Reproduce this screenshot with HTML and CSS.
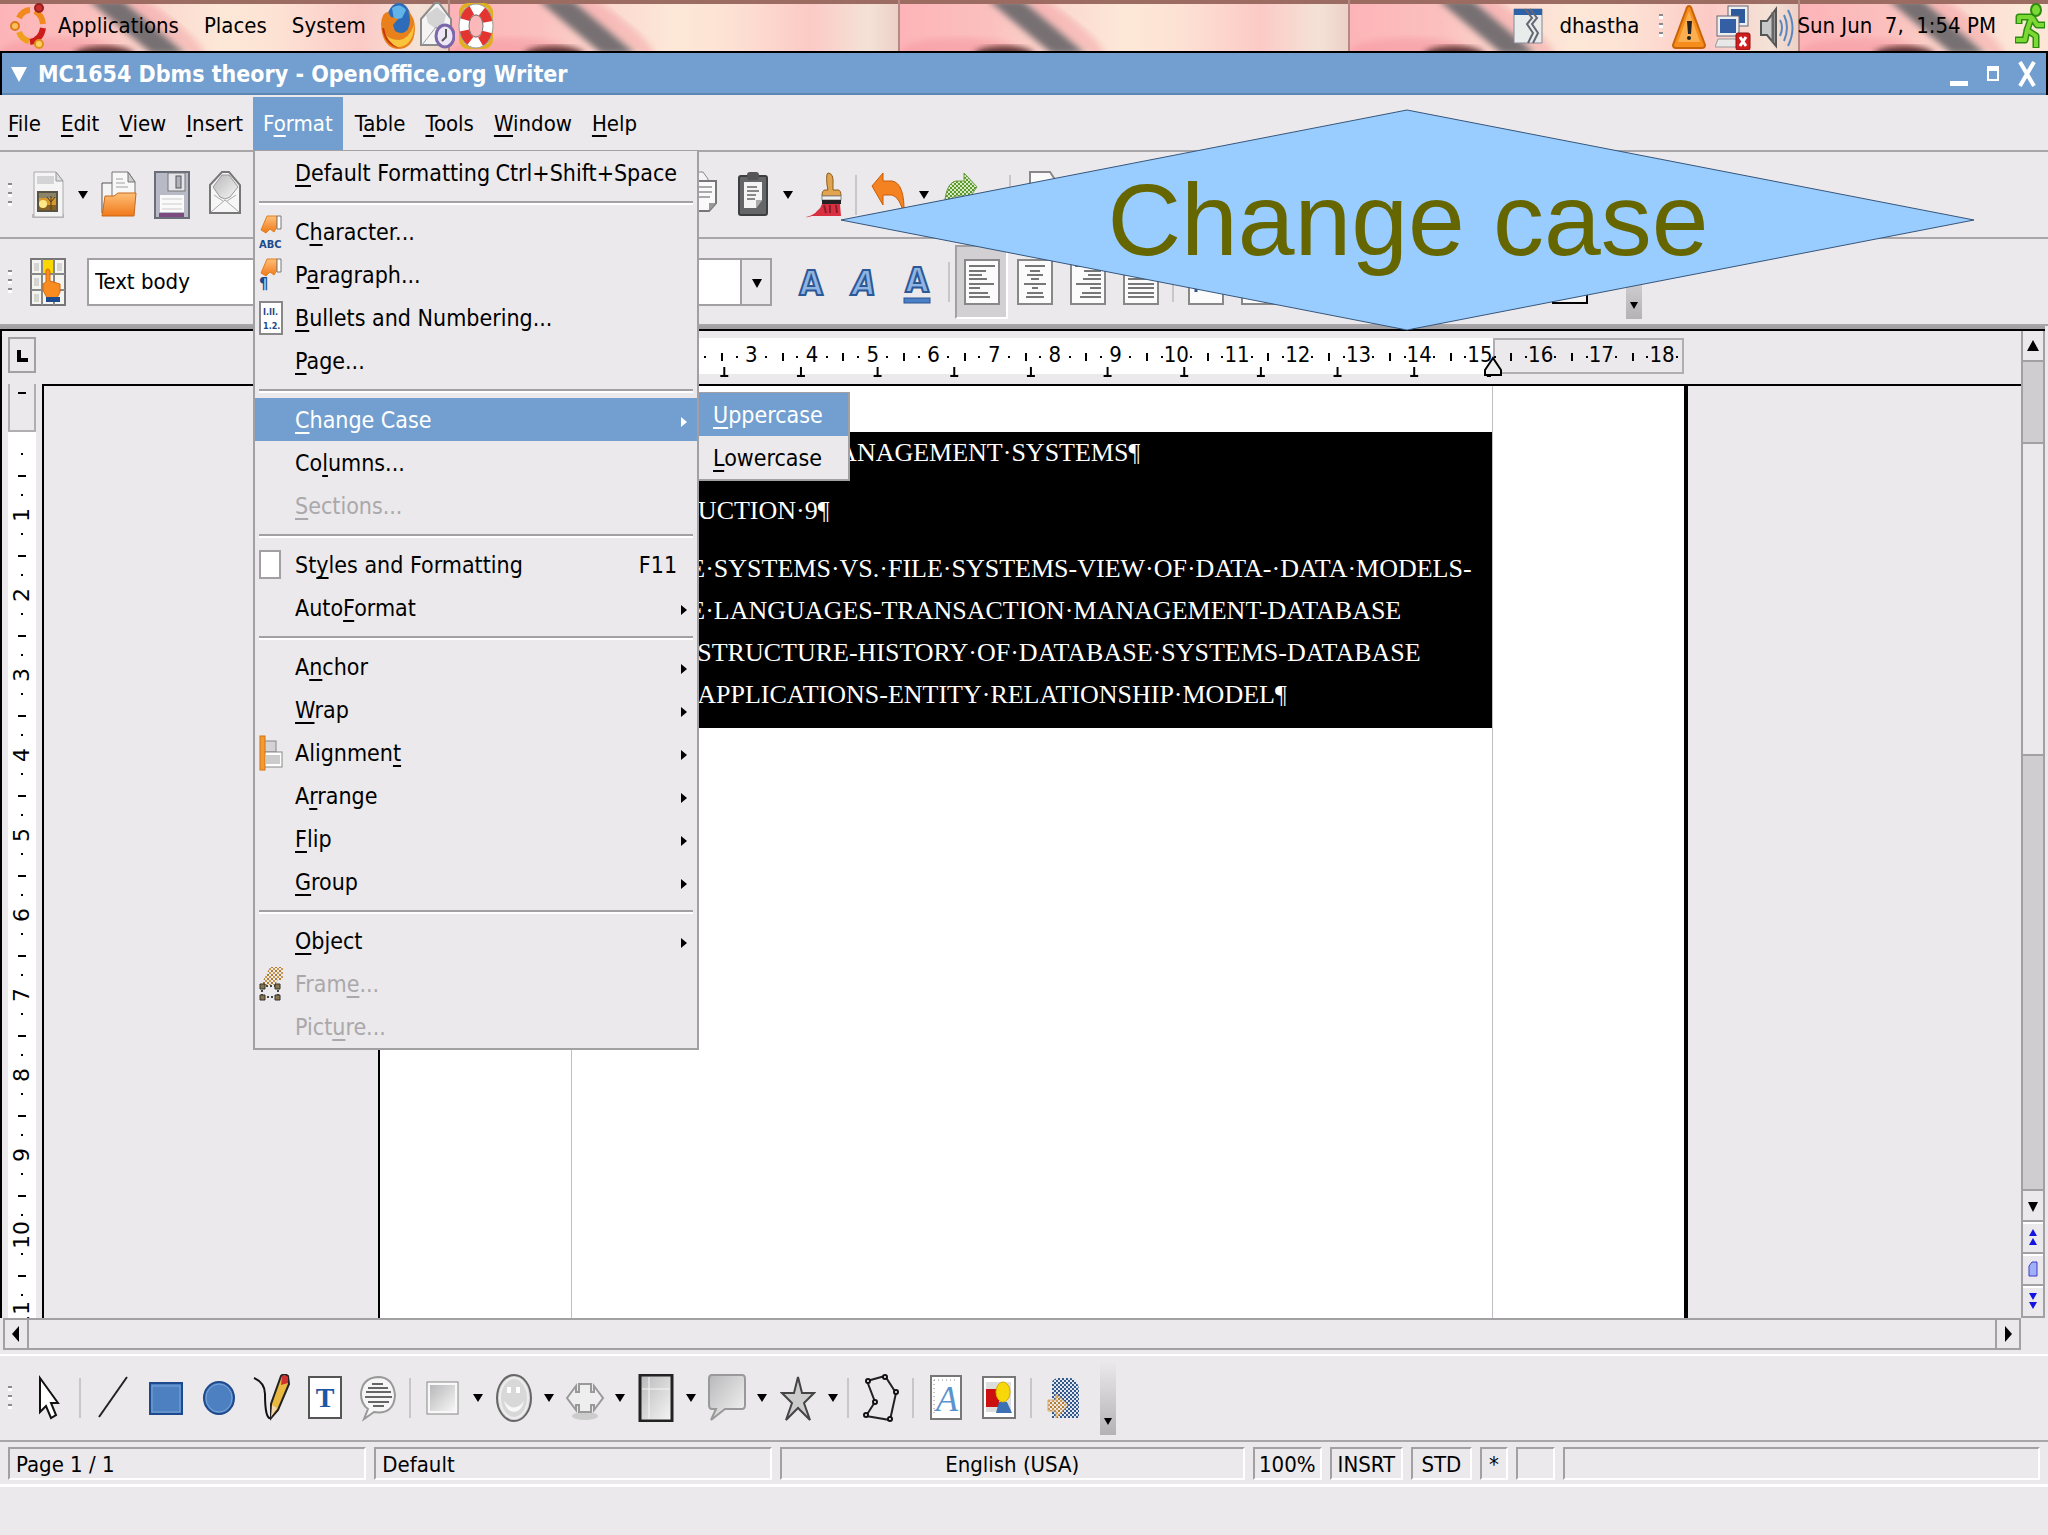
FILE: index.html
```html
<!DOCTYPE html>
<html lang="en">
<head>
    <meta charset="UTF-8">
    <meta name="viewport" content="width=device-width, initial-scale=1.0">
    <title>MC1654 Dbms theory - OpenOffice.org Writer</title>
    <link rel="stylesheet" href="styles.css">
</head>
<body>
    <!-- shared gradients for the icons -->
    <svg class="defs" width="0" height="0" aria-hidden="true">
        <defs>
            <linearGradient id="g-orange" x1="0" y1="0" x2="0" y2="1"><stop offset="0" stop-color="#ffc078"/><stop offset="1" stop-color="#f07818"/></linearGradient>
            <linearGradient id="g-silver" x1="0" y1="0" x2="1" y2="1"><stop offset="0" stop-color="#b8b8ba"/><stop offset="1" stop-color="#f6f6f6"/></linearGradient>
            <linearGradient id="g-skin" x1="0" y1="0" x2="1" y2="0">
                <stop offset="0" stop-color="#fdb4b8"/><stop offset=".2" stop-color="#fbc0be"/><stop offset=".38" stop-color="#fbdcd0"/>
                <stop offset=".5" stop-color="#fde8d8"/><stop offset=".62" stop-color="#fde2d4"/><stop offset=".8" stop-color="#fccaC6"/><stop offset=".93" stop-color="#f4e2d6"/><stop offset="1" stop-color="#eccfc6"/>
            </linearGradient>
            <filter id="soft"><feGaussianBlur stdDeviation="3"/></filter>
            <pattern id="check" width="4" height="4" patternUnits="userSpaceOnUse"><rect width="4" height="4" fill="#e4e8ee"/><rect width="2" height="2" fill="#33588a"/><rect x="2" y="2" width="2" height="2" fill="#33588a"/></pattern>
            <pattern id="check-green" width="4" height="4" patternUnits="userSpaceOnUse"><rect width="4" height="4" fill="#d8e8c8"/><rect width="2" height="2" fill="#5a9a28"/><rect x="2" y="2" width="2" height="2" fill="#5a9a28"/></pattern>
            <pattern id="check-tan" width="4" height="4" patternUnits="userSpaceOnUse"><rect width="4" height="4" fill="#ebe9eb"/><rect width="2" height="2" fill="#b07c30"/><rect x="2" y="2" width="2" height="2" fill="#c89850"/></pattern>
            <pattern id="panel-tile" width="450" height="51" patternUnits="userSpaceOnUse">
                <rect width="450" height="51" fill="url(#g-skin)"/>
                <ellipse cx="60" cy="52" rx="60" ry="14" fill="#f4949c" opacity=".5" filter="url(#soft)"/>
                <ellipse cx="165" cy="26" rx="50" ry="10" fill="#f09098" opacity=".4" transform="rotate(38 165 26)" filter="url(#soft)"/>
                <ellipse cx="104" cy="55" rx="30" ry="9" fill="#5a3230" filter="url(#soft)"/>
                <path d="M88 0h34l64 54h-34z" fill="#777072" filter="url(#soft)"/>
                <rect width="450" height="4" fill="#9c6c62"/>
                <rect x="448" width="2" height="51" fill="#b48a86"/>
            </pattern>
        </defs>
    </svg>

    <header class="panel">
        <svg class="panel-picture" width="100%" height="51" aria-hidden="true"><rect width="100%" height="51" fill="url(#panel-tile)"/></svg>
        <nav class="panel-menus">
            <button type="button"><svg class="ubuntu" width="36" height="48" viewBox="0 0 36 48" aria-hidden="true">
                <path d="M20 8a13 15 0 0 0-11 8" stroke="#f08a1c" stroke-width="6" fill="none"/><path d="M9 30a13 15 0 0 0 10 9" stroke="#f0a01c" stroke-width="6" fill="none"/><path d="M25 9q7 4 8 13" stroke="#f08a1c" stroke-width="6" fill="none"/><path d="M33 26q-2 12-13 14" stroke="#cc1c1c" stroke-width="6" fill="none"/>
                <circle cx="5" cy="24" r="4" fill="#f8c060" stroke="#e07818" stroke-width="2"/><circle cx="29" cy="6" r="4" fill="#c83030" stroke="#982020" stroke-width="2"/><circle cx="29" cy="42" r="4" fill="#f8d060" stroke="#e09018" stroke-width="2"/></svg>Applications</button>
            <button type="button">Places</button>
            <button type="button">System</button>
        </nav>
        <div class="launchers">
            <button type="button" aria-label="Firefox"><svg width="36" height="48" viewBox="0 0 36 48"><ellipse cx="19" cy="18" rx="12" ry="17" fill="#2c6cb8"/><path d="M12 6q8-6 14 2l-4 8-8 2z" fill="#62b4e8"/><path d="M1 22Q2 10 8 10l3 5 7 2-5 6 2 6q8 5 13-2 4-10 0-18 7 6 7 18-1 20-17 20Q2 46 1 22z" fill="#e8801c"/><path d="M4 30q4 16 16 15 14-3 14-22-5 14-15 15-11 0-15-8z" fill="#f8c43c"/><path d="M2 26q3 18 17 20-13-6-15-20z" fill="#c8380c"/></svg></button>
            <button type="button" aria-label="Evolution mail"><svg width="36" height="48" viewBox="0 0 36 48"><path d="M2 17L16 1l4 0 12 16v26H2z" fill="#f4f4f4" stroke="#8c8c8c" stroke-width="2"/><path d="M7 13l11-8 9 8-2 8-8 6-8-6z" fill="#d4d4d4"/><path d="M3 43l14-18 14 18" fill="none" stroke="#a0a0a0"/><ellipse cx="26" cy="34" rx="9" ry="11" fill="#ece6f6" stroke="#7c68a8" stroke-width="3"/><path d="M27 27v8l-4 4" fill="none" stroke="#555" stroke-width="2"/></svg></button>
            <button type="button" aria-label="Help"><svg width="36" height="48" viewBox="0 0 36 48"><rect x="3" y="3" width="30" height="42" rx="7" fill="none" stroke="#e0b020" stroke-width="4"/><ellipse cx="18" cy="24" rx="12" ry="17" fill="none" stroke="#fff" stroke-width="10"/><ellipse cx="18" cy="24" rx="12" ry="17" fill="none" stroke="#e43430" stroke-width="10" stroke-dasharray="12 11" stroke-dashoffset="17"/><ellipse cx="18" cy="24" rx="7" ry="11" fill="none" stroke="#777"/><ellipse cx="18" cy="24" rx="17" ry="22" fill="none" stroke="#999"/></svg></button>
        </div>
        <div class="tray">
            <svg width="30" height="38" viewBox="0 0 30 38" aria-hidden="true"><path d="M1 2h28v34H1z" fill="#e8ecea" stroke="#889" stroke-width="1"/><path d="M1 2h28v6H1z" fill="#2c62a8"/><path d="M12 2l7 9-5 6 6 9-5 10M17 2l7 9-5 6 6 9-5 10" fill="none" stroke="#667" stroke-width="2"/></svg>
            <button type="button" class="user">dhastha</button>
            <i class="handle"></i>
            <svg width="36" height="48" viewBox="0 0 36 48" aria-hidden="true"><path d="M18 4q2 0 3 4l13 35q0 3-3 3H5q-3 0-3-3L15 8q1-4 3-4z" fill="#f58c1c" stroke="#c86408" stroke-width="2"/><path d="M18 9l11 31H7z" fill="#fbaf50"/><path d="M16 19h5l-1 13h-3z" fill="#222"/><circle cx="18" cy="36" r="2" fill="#222"/></svg>
            <svg width="36" height="48" viewBox="0 0 36 48" aria-hidden="true"><rect x="13" y="4" width="20" height="20" fill="#eee" stroke="#667"/><rect x="16" y="7" width="14" height="14" fill="#2c5a9c"/><rect x="2" y="14" width="22" height="20" fill="#eee" stroke="#667"/><rect x="5" y="17" width="16" height="14" fill="#345fa4"/><path d="M3 37h18l3 8H0z" fill="#e8e8e8" stroke="#999"/><rect x="21" y="31" width="14" height="17" rx="2" fill="#d01c1c" stroke="#8c1010"/><path d="M25 35l6 9M31 35l-6 9" stroke="#fff" stroke-width="3"/></svg>
            <svg width="36" height="48" viewBox="0 0 36 48" aria-hidden="true"><path d="M2 19h6l9-12v37l-9-11H2z" fill="#c8c8c8" stroke="#555" stroke-width="2"/><path d="M14 10v30" stroke="#666" stroke-width="3"/><path d="M21 18q4 7 0 16M25 13q6 12 0 26M29 8q9 18 0 36" fill="none" stroke="#5a86c0" stroke-width="2"/></svg>
            <time class="clock">Sun Jun&nbsp; 7,&nbsp; 1:54 PM</time>
            <button type="button" aria-label="Log out"><svg width="36" height="48" viewBox="0 0 36 48"><g fill="none" stroke="#2c8c10" stroke-linejoin="round"><path stroke-width="7" d="M20 14l-5 14 9 6v12M15 28l-2 10H3M7 22v-7h13l5 8h8"/><g stroke="#7cd832"><path stroke-width="4" d="M20 14l-5 14 9 6v11M15 28l-2 10H4M7 21v-6h13l5 8h7"/></g></g><ellipse cx="24" cy="8" rx="5" ry="6" fill="#7cd832" stroke="#2c8c10" stroke-width="2"/></svg></button>
        </div>
    </header>

    <main class="window">
        <div class="titlebar">
            <svg width="18" height="16" viewBox="0 0 18 16" aria-hidden="true"><path d="M1 1h16L9 16z" fill="#fff"/></svg>
            <h1>MC1654 Dbms theory - OpenOffice.org Writer</h1>
            <div class="window-buttons">
                <button type="button" aria-label="Minimize"><svg width="18" height="26" viewBox="0 0 18 26"><path d="M0 20h18v5H0z" fill="#fff"/></svg></button>
                <button type="button" aria-label="Maximize"><svg width="18" height="26" viewBox="0 0 18 26"><path d="M3 5h12v15H3zM5 10v8h8v-8z" fill="#fff" fill-rule="evenodd"/></svg></button>
                <button type="button" aria-label="Close"><svg width="18" height="26" viewBox="0 0 18 26"><path d="M2 1l14 24M16 1L2 25" stroke="#fff" stroke-width="4"/></svg></button>
            </div>
        </div>

        <nav class="menubar">
            <button type="button"><u>F</u>ile</button>
            <button type="button"><u>E</u>dit</button>
            <button type="button"><u>V</u>iew</button>
            <button type="button"><u>I</u>nsert</button>
            <div class="menu-holder">
                <button type="button" class="active">F<u>o</u>rmat</button>
                <ul class="menu">
                    <li><button type="button"><span><u>D</u>efault Formatting</span><kbd>Ctrl+Shift+Space</kbd></button></li>
                    <li class="separator"></li>
                    <li><button type="button"><svg class="item-icon" width="24" height="36" viewBox="0 0 24 36"><path d="M8 2h10v11l-3 5-4-3-4 4-5-3z" fill="url(#g-orange)" stroke="#e08020"/><path d="M18 2h4v13h-4z" fill="#fff" stroke="#777"/><text x="0" y="34" class="abc">ABC</text></svg><span>C<u>h</u>aracter...</span></button></li>
                    <li><button type="button"><svg class="item-icon" width="24" height="36" viewBox="0 0 24 36"><path d="M8 2h10v11l-3 5-4-3-4 4-5-3z" fill="url(#g-orange)" stroke="#e08020"/><path d="M18 2h4v13h-4z" fill="#fff" stroke="#777"/><text x="0" y="32" class="pilcrow">¶</text></svg><span>P<u>a</u>ragraph...</span></button></li>
                    <li><button type="button"><svg class="item-icon" width="24" height="36" viewBox="0 0 24 36"><rect x="1" y="2" width="22" height="32" fill="#fff" stroke="#888" stroke-width="2"/><text x="4" y="15" class="num">I.II.</text><text x="4" y="29" class="num">1.2.</text></svg><span><u>B</u>ullets and Numbering...</span></button></li>
                    <li><button type="button"><span><u>P</u>age...</span></button></li>
                    <li class="separator"></li>
                    <li class="menu-holder">
                        <button type="button" class="active"><span><u>C</u>hange Case</span><i class="more"></i></button>
                        <ul class="menu submenu">
                            <li><button type="button" class="active"><span><u>U</u>ppercase</span></button></li>
                            <li><button type="button"><span><u>L</u>owercase</span></button></li>
                        </ul>
                    </li>
                    <li><button type="button"><span>Co<u>l</u>umns...</span></button></li>
                    <li><button type="button" disabled><span><u>S</u>ections...</span></button></li>
                    <li class="separator"></li>
                    <li><label><input type="checkbox"><span>St<u>y</u>les and Formatting</span><kbd>F11</kbd></label></li>
                    <li><button type="button"><span>Auto<u>F</u>ormat</span><i class="more"></i></button></li>
                    <li class="separator"></li>
                    <li><button type="button"><span>A<u>n</u>chor</span><i class="more"></i></button></li>
                    <li><button type="button"><span><u>W</u>rap</span><i class="more"></i></button></li>
                    <li><button type="button"><svg class="item-icon" width="24" height="36" viewBox="0 0 24 36"><rect x="5" y="6" width="12" height="11" fill="#d4d2d4" stroke="#888"/><rect x="5" y="17" width="18" height="15" fill="#fff" stroke="#888"/><rect x="7" y="20" width="14" height="9" fill="#ccc"/><rect x="1" y="1" width="5" height="34" fill="#f59a30" stroke="#d07410"/></svg><span>Alignmen<u>t</u></span><i class="more"></i></button></li>
                    <li><button type="button"><span>A<u>r</u>range</span><i class="more"></i></button></li>
                    <li><button type="button"><span><u>F</u>lip</span><i class="more"></i></button></li>
                    <li><button type="button"><span><u>G</u>roup</span><i class="more"></i></button></li>
                    <li class="separator"></li>
                    <li><button type="button"><span><u>O</u>bject</span><i class="more"></i></button></li>
                    <li><button type="button" disabled><svg class="item-icon" width="24" height="36" viewBox="0 0 24 36"><path d="M11 1h13v13h-5l-3 5H2z" fill="url(#check-tan)"/><path d="M3 20h16v11H3z" fill="none" stroke="#444" stroke-width="2" stroke-dasharray="2 2"/><path d="M1 18h5v5H1zM16 18h5v5h-5zM1 29h5v5H1zM16 29h5v5h-5z" fill="#8a7448" stroke="#333"/></svg><span>Fram<u>e</u>...</span></button></li>
                    <li><button type="button" disabled><span>Pict<u>u</u>re...</span></button></li>
                </ul>
            </div>
            <button type="button">T<u>a</u>ble</button>
            <button type="button"><u>T</u>ools</button>
            <button type="button"><u>W</u>indow</button>
            <button type="button"><u>H</u>elp</button>
        </nav>

        <div class="toolbar">
            <i class="handle"></i>
            <button type="button" aria-label="New"><svg width="36" height="48" viewBox="0 0 36 48"><path d="M2 43h32v4H2z" fill="#bbb"/><path d="M4 1h22l7 9v36H4z" fill="#f4f4f4" stroke="#aaa"/><path d="M26 1v9h7z" fill="#ddd" stroke="#999"/><path d="M7 5h17v8H7z" fill="#d4d4d6"/><rect x="7" y="20" width="21" height="21" fill="#5a5444"/><rect x="9" y="22" width="17" height="17" fill="#8c8468"/><rect x="9" y="27" width="17" height="9" fill="#d8982c"/><path d="M9 34h17v5H9z" fill="#8a6020"/><ellipse cx="13" cy="33" rx="4" ry="4" fill="#ffe888"/><path d="M21 25v14M17 26l4 5 4-5" stroke="#4a3c20" fill="none"/></svg></button>
            <button type="button" class="drop" aria-label="New, more"></button>
            <button type="button" aria-label="Open"><svg width="36" height="48" viewBox="0 0 36 48"><path d="M1 12h12v30H1z" fill="#f4f4f4" stroke="#555"/><path d="M11 1h16l7 10v16H11z" fill="#f8f8f8" stroke="#777"/><path d="M27 1v10h7z" fill="#ccc" stroke="#777"/><path d="M15 8h7M15 12h9M15 16h12" stroke="#ccc" stroke-width="2"/><path d="M4 25h9l4-3h18l-2 23H1z" fill="url(#g-orange)" stroke="#c86818"/></svg></button>
            <button type="button" aria-label="Save"><svg width="36" height="48" viewBox="0 0 36 48"><rect x="1" y="1" width="34" height="46" fill="#b8bac6" stroke="#6a6e7a" stroke-width="2"/><rect x="14" y="2" width="17" height="18" fill="#e4e4ea" stroke="#777"/><rect x="22" y="5" width="5" height="12" fill="#b0b2be" stroke="#555"/><rect x="6" y="24" width="24" height="17" fill="#fafafa"/><path d="M8 28h20M8 33h20M8 38h20" stroke="#ccc"/><path d="M5 42h25v4H5z" fill="#7a4a80"/></svg></button>
            <button type="button" aria-label="E-mail"><svg width="36" height="48" viewBox="0 0 36 48"><path d="M3 14L15 1h7l11 13v28H3z" fill="#f6f6f6" stroke="#777" stroke-width="2"/><path d="M6 16l9-12h7l9 12-8 10-5 2-5-2z" fill="url(#g-silver)" stroke="#999"/><path d="M4 41l14-12 14 12M7 24l9 6M29 24l-9 6" fill="none" stroke="#aaa"/></svg></button>
            <div class="toolbar-gap"></div>
            <button type="button" aria-label="Copy"><svg width="36" height="48" viewBox="0 0 36 48"><path d="M1 1h20l5 7v24H1z" fill="#f4f4f4" stroke="#888"/><path d="M10 10h24v22l-7 8H10z" fill="#fafafa" stroke="#777" stroke-width="2"/><path d="M14 16h16M14 21h16M14 26h14" stroke="#aaa" stroke-width="2"/><path d="M34 32h-7v8z" fill="#999"/></svg></button>
            <button type="button" aria-label="Paste"><svg width="36" height="48" viewBox="0 0 36 48"><rect x="4" y="5" width="28" height="39" rx="2" fill="#646668" stroke="#3c3e40" stroke-width="2"/><rect x="12" y="1" width="12" height="8" rx="3" fill="#555"/><path d="M9 11h18v18l-6 8H9z" fill="#f4f4f4"/><path d="M27 29h-6v8z" fill="#aaa"/><path d="M12 16h10M12 20h12M12 24h9M12 28h8" stroke="#888" stroke-width="2"/></svg></button>
            <button type="button" class="drop" aria-label="Paste, more"></button>
            <button type="button" aria-label="Format paintbrush"><svg width="36" height="48" viewBox="0 0 36 48"><path d="M22 2q6 0 5 12v5h5q3 0 3 6H16q0-6 3-6h3l-1-5q-1-12 1-12z" fill="#e0a450" stroke="#8c5c18"/><rect x="16" y="25" width="19" height="4" fill="#f0f0f0" stroke="#888"/><rect x="16" y="29" width="19" height="4" fill="#222"/><path d="M16 33h18l1 12H6q-6 2-6 1 8-2 11-6 4-3 5-7z" fill="#d83040"/><path d="M18 34l2 8M24 34v8M30 34l1 8" stroke="#8c1c2c" stroke-width="2"/></svg></button>
            <i class="divider"></i>
            <button type="button" aria-label="Undo"><svg width="36" height="48" viewBox="0 0 36 48"><path d="M1 15L12 2v8h9q13 2 12 34-4-18-12-20h-9v10z" fill="#f58220" stroke="#c85c08"/></svg></button>
            <button type="button" class="drop" aria-label="Undo, more"></button>
            <button type="button" aria-label="Redo"><svg width="36" height="48" viewBox="0 0 36 48"><path d="M35 16L22 2v8h-8Q2 12 2 44 6 26 14 25h8v9z" fill="url(#check-green)" stroke="#6a9a3c"/></svg></button>
            <button type="button" class="drop" aria-label="Redo, more"></button>
            <i class="divider"></i>
            <button type="button" aria-label="Hyperlink"><svg width="36" height="48" viewBox="0 0 36 48"><path d="M5 1h20l6 9v36H5z" fill="#fafafa" stroke="#888" stroke-width="2"/></svg></button>
        </div>

        <div class="toolbar">
            <i class="handle"></i>
            <button type="button" aria-label="Styles and Formatting"><svg width="36" height="48" viewBox="0 0 36 48"><rect x="1" y="1" width="34" height="46" fill="#f4f4f0" stroke="#777" stroke-width="2"/><path d="M12 1v46M24 1v46M1 16h34M1 32h34" stroke="#888" stroke-width="2"/><path d="M4 5h5v8H4zM27 5h5v8h-5zM4 20h5v8H4zM4 36h5v8H4z" fill="#d4d4d0"/><path d="M13 2h10v13H13z" fill="#f8d800"/><path d="M16 12q3-3 4 2v9l10 3v8l-3 6H17l-4-8v-6l3-2z" fill="#f88c20" stroke="#d86808"/><rect x="16" y="39" width="14" height="5" fill="#1c4a8c"/></svg></button>
            <div class="combos">
                <div class="combo combo-style"><select aria-label="Apply Style"><option>Text body</option></select></div>
                <div class="combo combo-font"><select aria-label="Font Name"><option></option></select></div>
                <div class="combo combo-size"><select aria-label="Font Size"><option></option></select></div>
            </div>
            <button type="button" aria-label="Bold"><svg width="36" height="48" viewBox="0 0 36 48"><text x="18" y="37" class="letter">A</text></svg></button>
            <button type="button" aria-label="Italic"><svg width="36" height="48" viewBox="0 0 36 48"><text x="18" y="37" class="letter slanted">A</text></svg></button>
            <button type="button" aria-label="Underline"><svg width="36" height="48" viewBox="0 0 36 48"><text x="18" y="34" class="letter">A</text><rect x="5" y="40" width="26" height="5" fill="#4a80c8" stroke="#2c5490"/></svg></button>
            <i class="divider"></i>
            <button type="button" class="pressed" aria-label="Align Left"><svg width="36" height="48" viewBox="0 0 36 48"><rect x="1" y="2" width="34" height="44" fill="#fbfbfb" stroke="#888" stroke-width="2"/><path d="M5 8h26M5 13h17M5 17h13M5 21h18M5 26h25M5 30h11M5 35h19M5 39h21" stroke="#777" stroke-width="2"/></svg></button>
            <button type="button" aria-label="Centered"><svg width="36" height="48" viewBox="0 0 36 48"><rect x="1" y="2" width="34" height="44" fill="#fbfbfb" stroke="#888" stroke-width="2"/><path d="M8 8h20M13 13h10M10 17h16M14 21h8M7 26h22M15 30h6M10 35h16M9 39h18" stroke="#777" stroke-width="2"/></svg></button>
            <button type="button" aria-label="Align Right"><svg width="36" height="48" viewBox="0 0 36 48"><rect x="1" y="2" width="34" height="44" fill="#fbfbfb" stroke="#888" stroke-width="2"/><path d="M5 8h26M14 13h17M18 17h13M13 21h18M6 26h25M20 30h11M12 35h19M10 39h21" stroke="#777" stroke-width="2"/></svg></button>
            <button type="button" aria-label="Justified"><svg width="36" height="48" viewBox="0 0 36 48"><rect x="1" y="2" width="34" height="44" fill="#fbfbfb" stroke="#888" stroke-width="2"/><path d="M5 8h26M5 13h26M5 17h26M5 21h26M5 26h26M5 30h26M5 35h26M5 39h26" stroke="#777" stroke-width="2"/></svg></button>
            <i class="divider"></i>
            <button type="button" aria-label="Numbering"><svg width="36" height="48" viewBox="0 0 36 48"><rect x="1" y="2" width="34" height="44" fill="#fbfbfb" stroke="#888" stroke-width="2"/><path d="M8 30v4" stroke="#2c5490" stroke-width="3"/></svg></button>
            <button type="button" aria-label="Bullets"><svg width="36" height="48" viewBox="0 0 36 48"><rect x="1" y="2" width="34" height="44" fill="#fbfbfb" stroke="#888" stroke-width="2"/></svg></button>
            <button type="button" class="far" aria-label="Background Color"><svg width="36" height="48" viewBox="0 0 36 48"><rect x="1" y="2" width="34" height="43" fill="#f4f4f4" stroke="#000" stroke-width="2"/></svg></button>
            <button type="button" class="overflow" aria-label="More controls"></button>
        </div>

        <div class="workspace">
            <div class="corner"><button type="button" aria-label="Tab type"><svg width="26" height="34" viewBox="0 0 26 34"><path d="M8 12v12h11v-4h-7v-8z" fill="#000"/></svg></button></div>
            <div class="ruler-bar">
                <div class="ruler">
                    <div class="ruler-bands"><b class="before"></b><b class="inside"></b><b class="after"></b></div>
                    <div class="ruler-tabs"></div>
                    <div class="ruler-scale">
                        <span>1</span><span>2</span><span>3</span><span>4</span><span>5</span><span>6</span><span>7</span><span>8</span><span>9</span><span>10</span><span>11</span><span>12</span><span>13</span><span>14</span><span>15</span><span>16</span><span>17</span><span>18</span>
                    </div>
                    <svg class="indent" width="18" height="20" viewBox="0 0 18 20" aria-hidden="true"><path d="M9 2l8 12v5H1v-5z" fill="#eee" stroke="#000" stroke-width="2"/></svg>
                </div>
            </div>
            <div class="side-ruler">
                <div class="side-before"><i></i></div>
                <div class="side-scale">
                    <span></span><span>1</span><span>2</span><span>3</span><span>4</span><span>5</span><span>6</span><span>7</span><span>8</span><span>9</span><span>10</span><span>11</span>
                </div>
            </div>
            <div class="view">
                <article class="page">
                    <div class="text-area">
                        <div class="selection">
                            <p>MC1654·DATABASE·MANAGEMENT·SYSTEMS¶</p>
                            <p>1.·INTRODUCTION·9¶</p>
                            <p>DATABASE·SYSTEMS·VS.·FILE·SYSTEMS-VIEW·OF·DATA-·DATA·MODELS-<br>DATABASE·LANGUAGES-TRANSACTION·MANAGEMENT-DATABASE<br>SYSTEMS·STRUCTURE-HISTORY·OF·DATABASE·SYSTEMS-DATABASE<br>SYSTEMS·APPLICATIONS-ENTITY·RELATIONSHIP·MODEL¶</p>
                        </div>
                    </div>
                </article>
            </div>
            <div class="scroll-y">
                <button type="button" aria-label="Scroll up"><svg width="14" height="14" viewBox="0 0 14 14"><path d="M7 1l6 11H1z" fill="#000"/></svg></button>
                <div class="track"><div class="thumb"></div></div>
                <button type="button" aria-label="Scroll down"><svg width="14" height="14" viewBox="0 0 14 14"><path d="M7 13l5-10H2z" fill="#000"/></svg></button>
                <button type="button" class="nav" aria-label="Previous page"><svg width="10" height="18" viewBox="0 0 10 18"><path d="M5 1l4 7H1zM5 10l4 7H1z" fill="#1414e0"/></svg></button>
                <button type="button" class="nav" aria-label="Navigation"><svg width="10" height="18" viewBox="0 0 10 18"><path d="M4 2h5v14H1V6z" fill="#a0b0f8" stroke="#3c3cc8"/></svg></button>
                <button type="button" class="nav" aria-label="Next page"><svg width="10" height="18" viewBox="0 0 10 18"><path d="M5 8l4-7H1zM5 17l4-7H1z" fill="#1414e0"/></svg></button>
            </div>
        </div>
        <div class="scroll-x">
            <button type="button" aria-label="Scroll left"><svg width="8" height="16" viewBox="0 0 8 16"><path d="M0 8l7-8v16z" fill="#000"/></svg></button>
            <div class="track-x"></div>
            <button type="button" aria-label="Scroll right"><svg width="8" height="16" viewBox="0 0 8 16"><path d="M8 8L1 0v16z" fill="#000"/></svg></button>
        </div>

        <div class="toolbar drawing">
            <i class="handle"></i>
            <button type="button" aria-label="Select"><svg width="36" height="48" viewBox="0 0 36 48"><path d="M10 4v34l6-6 5 12 5-3-5-12h7z" fill="#fff" stroke="#111" stroke-width="2"/></svg></button>
            <i class="divider"></i>
            <button type="button" aria-label="Line"><svg width="36" height="48" viewBox="0 0 36 48"><path d="M4 43L32 3" stroke="#222" stroke-width="2"/></svg></button>
            <button type="button" aria-label="Rectangle"><svg width="36" height="48" viewBox="0 0 36 48"><rect x="2" y="9" width="32" height="31" fill="#4c80c0" stroke="#1c4a8c" stroke-width="2"/><rect x="4" y="12" width="28" height="26" fill="none" stroke="#7ca4d8"/></svg></button>
            <button type="button" aria-label="Ellipse"><svg width="36" height="48" viewBox="0 0 36 48"><ellipse cx="18" cy="24" rx="15" ry="16" fill="#4c80c0" stroke="#1c4a8c" stroke-width="2"/><ellipse cx="18" cy="24" rx="13" ry="14" fill="none" stroke="#7ca4d8"/></svg></button>
            <button type="button" aria-label="Freeform Line"><svg width="40" height="48" viewBox="0 0 40 48"><path d="M2 4q11 5 11 16 0 26 6 24" fill="none" stroke="#111" stroke-width="2"/><path d="M29 2q3-3 7 0l1 8-11 26-7 8v-14z" fill="#e8b840" stroke="#222" stroke-width="2"/><path d="M30 2q3-2 6 1v6l-7 2z" fill="#d03030"/><path d="M20 31l5 3-6 9z" fill="#f4d8b0"/></svg></button>
            <button type="button" aria-label="Text"><svg width="36" height="48" viewBox="0 0 36 48"><rect x="2" y="3" width="32" height="41" fill="#fff" stroke="#555" stroke-width="2"/><text x="18" y="33" class="t-glyph">T</text></svg></button>
            <button type="button" aria-label="Callout"><svg width="36" height="48" viewBox="0 0 36 48"><path d="M8 35L4 45l10-7q20 3 21-17Q33 3 18 3 2 4 1 20q0 10 7 15z" fill="#f6f6f6" stroke="#999" stroke-width="2"/><path d="M12 10h11M8 14h20M6 18h25M5 23h27M8 28h21M13 32h11" stroke="#666" stroke-width="2"/></svg></button>
            <i class="divider"></i>
            <button type="button" aria-label="Basic Shapes"><svg width="36" height="48" viewBox="0 0 36 48"><rect x="2" y="8" width="31" height="32" fill="#f8f8f8" stroke="#888"/><rect x="5" y="11" width="25" height="26" fill="url(#g-silver)"/></svg></button>
            <button type="button" class="drop" aria-label="Basic Shapes, more"></button>
            <button type="button" aria-label="Symbol Shapes"><svg width="36" height="48" viewBox="0 0 36 48"><ellipse cx="18" cy="24" rx="17" ry="23" fill="#d8d8d8" stroke="#666" stroke-width="2"/><ellipse cx="18" cy="24" rx="14" ry="20" fill="none" stroke="#eee" stroke-width="2"/><path d="M11 13h4v6h-4zM20 13h4v6h-4z" fill="#fff"/><path d="M8 27q10 13 20 0-3 11-10 11T8 27z" fill="#f8f8f8"/></svg></button>
            <button type="button" class="drop" aria-label="Symbol Shapes, more"></button>
            <button type="button" aria-label="Block Arrows"><svg width="40" height="48" viewBox="0 0 40 48"><ellipse cx="20" cy="42" rx="13" ry="4" fill="#ccc"/><path d="M2 24L11 12v6h3v-8h12v8h3v-6l9 12-9 12v-5h-3v7H14v-7h-3v5z" fill="#eee" stroke="#999" stroke-width="2"/></svg></button>
            <button type="button" class="drop" aria-label="Block Arrows, more"></button>
            <button type="button" aria-label="Flowcharts"><svg width="36" height="48" viewBox="0 0 36 48"><rect x="2" y="1" width="32" height="46" fill="url(#g-silver)" stroke="#222" stroke-width="3"/><path d="M11 3v42M4 15h28" stroke="#f6f6f6"/></svg></button>
            <button type="button" class="drop" aria-label="Flowcharts, more"></button>
            <button type="button" aria-label="Callouts"><svg width="40" height="48" viewBox="0 0 40 48"><path d="M5 1h30q3 0 3 4v26q0 4-3 4H18L4 46l5-11H5q-3 0-3-4V5q0-4 3-4z" fill="url(#g-silver)" stroke="#999" stroke-width="2"/></svg></button>
            <button type="button" class="drop" aria-label="Callouts, more"></button>
            <button type="button" aria-label="Stars"><svg width="36" height="48" viewBox="0 0 36 48"><path d="M18 3l4 16h12L24 29l6 17-12-12L6 46l6-17L2 19h12z" fill="#ccc" stroke="#444" stroke-width="2"/></svg></button>
            <button type="button" class="drop" aria-label="Stars, more"></button>
            <i class="divider"></i>
            <button type="button" aria-label="Points"><svg width="36" height="48" viewBox="0 0 36 48"><path d="M4 7L22 2l11 17-6 27L3 42l9-14z" fill="none" stroke="#222" stroke-width="2"/><g fill="#fff" stroke="#111" stroke-width="2"><circle cx="5" cy="7" r="2"/><circle cx="22" cy="3" r="2"/><circle cx="33" cy="18" r="2"/><circle cx="27" cy="45" r="2"/><circle cx="3" cy="41" r="2"/><circle cx="12" cy="28" r="2"/></g></svg></button>
            <i class="divider"></i>
            <button type="button" aria-label="Fontwork Gallery"><svg width="36" height="48" viewBox="0 0 36 48"><rect x="3" y="2" width="30" height="43" fill="#fff" stroke="#777" stroke-width="2"/><path d="M6 6h24M6 6v36" stroke="#888" stroke-dasharray="1 3"/><text x="19" y="37" class="fontwork">A</text></svg></button>
            <button type="button" aria-label="From File"><svg width="36" height="48" viewBox="0 0 36 48"><rect x="2" y="3" width="32" height="41" fill="#fff" stroke="#777" stroke-width="2"/><rect x="5" y="8" width="25" height="30" fill="#ddd"/><rect x="5" y="15" width="13" height="18" fill="#cc1010"/><path d="M18 28h8l5 11H15z" fill="#3c70b4"/><ellipse cx="22" cy="18" rx="7" ry="10" fill="#f8d808" stroke="#d4ac00"/></svg></button>
            <i class="divider"></i>
            <button type="button" aria-label="Extrusion On/Off"><svg width="36" height="48" viewBox="0 0 36 48"><path d="M6 8q2-4 7-4h12q6 2 8 10v30H6z" fill="url(#check)"/><path d="M2 26h8v-6l12 11-12 13v-7H2z" fill="url(#check-tan)" stroke="#d8a868"/></svg></button>
            <button type="button" class="overflow" aria-label="More controls"></button>
        </div>

        <footer class="statusbar">
            <span>Page 1 / 1</span>
            <span>Default</span>
            <span class="center">English (USA)</span>
            <span class="center">100%</span>
            <span class="center">INSRT</span>
            <span class="center">STD</span>
            <span class="center">*</span>
            <span></span>
            <span></span>
        </footer>

        <div class="callout">
            <svg width="1136" height="222" viewBox="0 0 1136 222" aria-hidden="true"><path d="M1 111L567 1l567 110-567 110z" fill="#99ccff" stroke="#36567c"/></svg>
            <p>Change case</p>
        </div>
    </main>
</body>
</html>
```
FILE: styles.css
```css
* {
    box-sizing: border-box;
}

body {
    margin: 0;
    height: 100vh;
    display: flex;
    flex-direction: column;
    background-color: #ebe9eb;
    color: #000;
    font-family: "DejaVu Sans Condensed", "DejaVu Sans", sans-serif;
    font-size: 22px;
    line-height: 28px;
}

button, select {
    font: inherit;
    color: inherit;
    background: none;
    border: none;
    border-radius: 0;
    margin: 0;
    padding: 0;
}

svg {
    display: block;
    flex: none;
}

u {
    text-decoration-thickness: 2px;
    text-underline-offset: 4px;
    text-decoration-skip-ink: none;
}

.defs {
    position: absolute;
}

/* desktop panel */
.panel {
    position: relative;
    flex: none;
    display: flex;
    align-items: center;
    height: 51px;
    padding-left: 10px;
    overflow: hidden;
}

.panel-picture {
    position: absolute;
    top: 0;
    left: 0;
}

.panel-menus, .launchers, .tray {
    position: relative;
    display: flex;
    align-items: center;
}

.panel-menus {
    gap: 25px;
}

.panel-menus button {
    display: flex;
    align-items: center;
    gap: 12px;
}

.launchers {
    gap: 3px;
    margin-left: 14px;
}

.tray {
    margin-left: auto;
    gap: 8px;
}

.user {
    margin: 0 12px 0 8px;
}

.clock {
    white-space: nowrap;
    margin: 0 8px 0 -6px;
}

.handle {
    flex: none;
    width: 4px;
    height: 24px;
    background: repeating-linear-gradient(#8c8a8c 0 2px, #fff 2px 5px, transparent 5px 9px);
}

/* writer window */
.window {
    position: relative;
    flex: 1;
    min-height: 0;
    display: flex;
    flex-direction: column;
    border-top: 2px solid #000;
    padding-bottom: 48px;
}

.titlebar {
    flex: none;
    display: flex;
    align-items: center;
    height: 42px;
    padding: 0 10px 0 8px;
    gap: 10px;
    background-color: #729fcf;
    border: solid #000;
    border-width: 0 2px;
    box-shadow: inset 0 -2px #5c86b4;
    color: #fff;
}

.titlebar h1 {
    margin: 0;
    font-size: 23px;
    font-weight: bold;
}

.window-buttons {
    display: flex;
    gap: 16px;
    margin-left: auto;
}

.menubar {
    flex: none;
    display: flex;
    height: 57px;
    margin-left: -2px;
    padding-top: 2px;
    border-bottom: 2px solid #a8a6a8;
}

.menubar > button, .menubar > .menu-holder > button {
    height: 53px;
    padding: 0 10px;
}

.menu-holder {
    position: relative;
}

.menu-holder + button {
    margin-left: 2px;
}

.active {
    background-color: #729fcf;
    color: #fff;
}

.menu {
    position: absolute;
    z-index: 2;
    top: 53px;
    left: 0;
    width: 446px;
    margin: 0;
    padding: 0;
    list-style: none;
    background-color: #ebe9eb;
    border: 2px solid #a2a0a2;
    border-top-width: 1px;
    font-size: 23px;
}

.menu button, .menu label {
    display: flex;
    align-items: center;
    width: 100%;
    height: 43px;
    padding: 0 20px 0 40px;
    white-space: nowrap;
    text-align: left;
}

.menu .item-icon {
    margin: 0 12px 0 -36px;
}

.menu input {
    appearance: none;
    width: 22px;
    height: 29px;
    margin: 0 14px 0 -36px;
    background-color: #fff;
    border: 2px solid #a2a0a2;
}

.menu button:disabled {
    color: #aaa8aa;
}

.menu kbd {
    font: inherit;
    margin-left: auto;
}

.menu .separator {
    height: 16px;
    margin: 0 4px;
    background: linear-gradient(#a2a0a2 0 2px, #fff 2px 4px) no-repeat 0 7px / 100% 4px;
}

.more {
    margin: 4px -10px 0 auto;
    border: solid transparent;
    border-width: 5px 0 5px 6px;
    border-left-color: currentColor;
}

.menu.submenu {
    top: -6px;
    left: 442px;
    width: 153px;
}

.menu.submenu button {
    padding-left: 14px;
}

.abc {
    font: bold 11px "DejaVu Sans Condensed", sans-serif;
    fill: #1c4a8c;
}

.pilcrow {
    font: bold 16px "DejaVu Sans Condensed", sans-serif;
    fill: #1c4a8c;
}

.num {
    font: bold 9px "DejaVu Sans Condensed", sans-serif;
    fill: #1c4a8c;
}

/* toolbars */
.toolbar {
    flex: none;
    display: flex;
    align-items: center;
    height: 87px;
    border-bottom: 2px solid #a8a6a8;
}

.toolbar .handle {
    margin: 0 9px 0 8px;
}

.toolbar button {
    flex: none;
    display: flex;
    align-items: center;
    justify-content: center;
    width: 53px;
    height: 74px;
}

.toolbar .drop {
    width: 18px;
}

.toolbar .drop::before {
    content: "";
    border: solid transparent;
    border-width: 8px 5px 0;
    border-top-color: #000;
}

.toolbar .pressed {
    background-color: #d2d0d2;
    border: 2px solid;
    border-color: #a2a0a2 #fff #fff #a2a0a2;
}

.toolbar .far {
    margin-left: 258px;
}

.toolbar .overflow {
    align-items: flex-end;
    width: 16px;
    margin-left: 10px;
    padding-bottom: 10px;
    background: linear-gradient(#ebe9eb, #b4b2b4);
}

.far + .overflow {
    margin-left: 30px;
}

.overflow::before {
    content: "";
    border: solid transparent;
    border-width: 7px 4px 0;
    border-top-color: #000;
}

.divider {
    flex: none;
    width: 12px;
    height: 40px;
    background: linear-gradient(#c8c6c8, #c8c6c8) no-repeat center / 2px 100%;
}

.toolbar-gap {
    width: 422px;
}

.combos {
    display: flex;
    gap: 12px;
    width: 685px;
    margin: 0 12px 0 13px;
}

.combo {
    position: relative;
    display: flex;
    height: 48px;
    border: 2px solid #a2a0a2;
    background-color: #fff;
}

.combo-style {
    width: 260px;
}

.combo-font {
    flex: 1;
}

.combo-size {
    width: 120px;
}

.combo select {
    appearance: none;
    flex: 1;
    min-width: 0;
    padding-left: 6px;
}

.combo::after {
    content: "";
    width: 28px;
    border-left: 2px solid #a2a0a2;
    background-color: #ebe9eb;
}

.combo::before {
    content: "";
    position: absolute;
    top: 19px;
    right: 8px;
    border: solid transparent;
    border-width: 9px 5px 0;
    border-top-color: #000;
}

.letter {
    font: bold 34px "DejaVu Sans Condensed", sans-serif;
    text-anchor: middle;
    fill: #8fb4e4;
    stroke: #2c5896;
    stroke-width: 2px;
}

.slanted {
    font-style: italic;
}

.t-glyph {
    font: bold 28px "Liberation Serif", serif;
    text-anchor: middle;
    fill: #1c56a4;
}

.fontwork {
    font: italic 36px "Liberation Serif", serif;
    text-anchor: middle;
    fill: #5a94d0;
}

/* rulers, page and scroll bars */
.workspace {
    flex: 1;
    display: grid;
    grid-template-columns: 40px 1fr 24px;
    grid-template-rows: 53px 1fr;
    min-height: 0;
    margin: 3px 3px 0 0;
    border: solid #000;
    border-width: 2px 0 0 2px;
    box-shadow: 0 -3px #a2a0a2;
}

.corner {
    padding: 6px 0 0 6px;
}

.corner button {
    border: 2px solid #a2a0a2;
    width: 28px;
    height: 36px;
    display: flex;
    align-items: center;
    justify-content: center;
}

.ruler-bar {
    padding: 7px 0 0 2px;
    overflow: hidden;
}

.ruler {
    display: grid;
    grid-template-columns: 100%;
    width: 1310px;
    margin: 0 auto;
    height: 42px;
    overflow: hidden;
}

.ruler > * {
    grid-area: 1 / 1;
}

.ruler-bands {
    display: flex;
    height: 36px;
}

.before {
    width: 193px;
    border: 2px solid #b0aeb0;
}

.inside {
    flex: 1;
    background-color: #fff;
}

.after {
    width: 191px;
    margin-right: 4px;
    border: 2px solid #b0aeb0;
}

/* default tab stops */
.ruler-tabs {
    width: 920px;
    margin: 29px 0 0 193px;
}

.ruler-tabs::before {
    content: "";
    display: block;
    height: 10px;
    background-image:
        linear-gradient(90deg, #000 8px, transparent 8px),
        linear-gradient(90deg, transparent 3px, #000 3px, #000 5px, transparent 5px);
    background-size: calc(100% / 12) 2px, calc(100% / 12) 8px;
    background-position: -4px 8px, -4px 0;
    background-repeat: repeat-x;
}

.ruler-scale {
    display: flex;
    width: 1093px;
    height: 36px;
    margin-left: 222px;
}

.ruler-scale span {
    flex: 1;
    text-align: center;
    line-height: 34px;
    background:
        linear-gradient(#000, #000) no-repeat 0 15px / 2px 8px,
        linear-gradient(#000, #000) no-repeat 25% 18px / 2px 2px,
        linear-gradient(#000, #000) no-repeat 75% 18px / 2px 2px;
}

.indent {
    margin: 18px 0 0 1106px;
}

.side-ruler {
    grid-column: 1;
    width: 28px;
    margin-left: 6px;
    overflow: hidden;
    background-color: #fff;
    min-height: 0;
}

.side-before {
    height: 48px;
    background-color: #ebe9eb;
    border: 2px solid #b0aeb0;
    border-top: none;
    padding: 8px 8px;
}

.side-before i {
    display: block;
    width: 8px;
    height: 2px;
    background-color: #000;
}

.side-scale span {
    display: flex;
    align-items: center;
    justify-content: center;
    width: 28px;
    height: 80px;
    font-family: "DejaVu Sans", sans-serif;
    writing-mode: vertical-rl;
    transform: rotate(180deg);
    background:
        linear-gradient(#000, #000) no-repeat 10px 100% / 8px 2px,
        linear-gradient(#000, #000) no-repeat 13px 25% / 2px 2px,
        linear-gradient(#000, #000) no-repeat 13px 75% / 2px 2px;
}

.side-scale span:first-child {
    margin-top: -37px;
    clip-path: inset(0 0 37px 0);
}

.view {
    min-width: 0;
    min-height: 0;
    overflow: hidden;
    border: solid #000;
    border-width: 2px 0 0 2px;
}

.page {
    width: 1310px;
    height: 100%;
    margin: 0 auto;
    padding: 0 191px;
    background-color: #fff;
    border: solid #000;
    border-width: 0 4px 0 2px;
}

.text-area {
    height: 100%;
    padding-top: 46px;
    border: solid #c0bec0;
    border-width: 0 1px;
}

.selection {
    height: 296px;
    background-color: #000;
    color: #fff;
    font-family: "Liberation Serif", serif;
    font-size: 26px;
    line-height: 42px;
    white-space: nowrap;
}

.selection p {
    margin: 0 0 16px;
}

.scroll-y {
    grid-column: 3;
    grid-row: 1 / 3;
    display: flex;
    flex-direction: column;
    background-color: #cfcdcf;
    border: solid #a2a0a2;
    border-width: 0 2px;
}

.scroll-y button, .scroll-x button {
    flex: none;
    display: flex;
    align-items: center;
    justify-content: center;
    height: 31px;
    background-color: #ebe9eb;
    border-bottom: 2px solid #a2a0a2;
}

.scroll-y .nav {
    height: 32px;
    box-shadow: inset 0 2px #fff;
}

.track {
    flex: 1;
    padding-top: 80px;
    border-bottom: 2px solid #a2a0a2;
}

.thumb {
    height: 42%;
    background-color: #ebe9eb;
    border: solid #a2a0a2;
    border-width: 2px 0;
}

.scroll-x {
    flex: none;
    display: flex;
    margin: 0 27px 0 3px;
    height: 32px;
    border: 2px solid #a2a0a2;
}

.scroll-x button {
    width: 22px;
    height: 28px;
    border: none;
}

.track-x {
    flex: 1;
    border: solid #a2a0a2;
    border-width: 0 2px;
}

.drawing {
    margin-top: 4px;
    height: 88px;
    border-top: 2px solid #fff;
}

/* status bar */
.statusbar {
    flex: none;
    display: grid;
    grid-template-columns: 359fr 398fr 466fr 69px 73px 61px 28px 39px 478fr;
    gap: 8px;
    height: 45px;
    padding: 5px 8px 4px;
    border-bottom: 3px solid #fff;
}

.statusbar span {
    padding-left: 6px;
    line-height: 32px;
    border: 2px solid;
    border-color: #a2a0a2 #fff #fff #a2a0a2;
    overflow: hidden;
    white-space: nowrap;
}

.statusbar .center {
    padding: 0;
    text-align: center;
}

/* diamond laid over the toolbars */
.callout {
    position: absolute;
    z-index: 1;
    top: 56px;
    left: 840px;
    width: 1136px;
    height: 222px;
}

.callout p {
    position: absolute;
    inset: 0;
    margin: 0;
    text-align: center;
    font-family: "Liberation Sans", Arial, sans-serif;
    font-size: 102px;
    line-height: 222px;
    color: #666600;
}
```
